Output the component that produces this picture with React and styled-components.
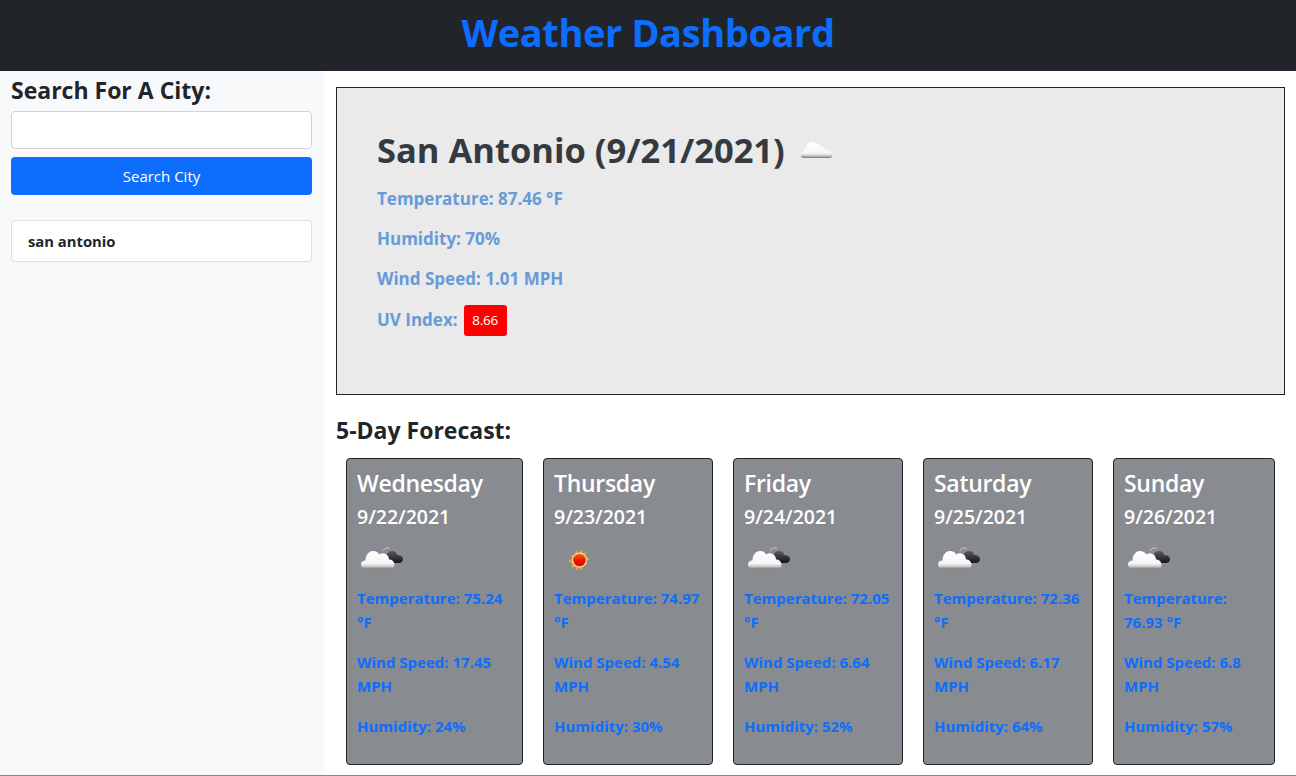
import React from 'react';
import styled, { createGlobalStyle } from 'styled-components';

const Global = createGlobalStyle`
  * { box-sizing: border-box; }
  html, body { margin: 0; padding: 0; background: #fff; }
  body { font-family: "Open Sans", "Noto Sans", "Liberation Sans", sans-serif; color: #212529; height: 776px; overflow: hidden; }
`;

const Page = styled.div`
  height: 776px;
  display: flex;
  flex-direction: column;
  border-bottom: 1px solid #8a8a8a;
`;

const Header = styled.header`
  height: 71px;
  flex: none;
  background: #212529;
  color: #0d6efd;
  display: flex;
  align-items: center;
  justify-content: center;
`;

const Title = styled.h1`
  margin: 0 0 8px;
  font-size: 38px;
  font-weight: 700;
  letter-spacing: -0.4px;
`;

const Body = styled.div`
  flex: 1;
  display: flex;
  min-height: 0;
`;

const Sidebar = styled.aside`
  width: 324px;
  flex: none;
  background: #f8f9fa;
  padding: 4px 12px 0 11px;
`;

const SearchTitle = styled.h4`
  margin: 0 0 6px;
  font-size: 23px;
  line-height: 30px;
  font-weight: 700;
`;

const SearchInput = styled.input`
  display: block;
  width: 100%;
  height: 38px;
  background: #fff;
  border: 1px solid #ced4da;
  border-radius: 4px;
`;

const SearchButton = styled.button`
  display: block;
  width: 100%;
  height: 38px;
  margin-top: 8px;
  background: #0d6efd;
  color: #fff;
  border: 0;
  border-radius: 4px;
  font-family: inherit;
  font-size: 15px;
`;

const HistoryItem = styled.div`
  height: 42px;
  margin-top: 25px;
  padding: 0 16px;
  display: flex;
  align-items: center;
  background: #fff;
  border: 1px solid #dfdfdf;
  border-radius: 4px;
  font-size: 14.8px;
  font-weight: 700;
`;

const Main = styled.main`
  flex: 1;
  padding: 16px 11px 0 12px;
  min-width: 0;
`;

const Current = styled.section`
  height: 308px;
  padding: 39px 40px;
  background: #eaeaea;
  border: 1px solid #212529;
`;

const CityRow = styled.div`
  display: flex;
  align-items: center;
  gap: 15px;
  height: 44px;
  margin-bottom: 16px;
`;

const City = styled.h2`
  margin: 0;
  font-size: 34.5px;
  font-weight: 700;
  color: #343a40;
`;

const Stat = styled.p`
  margin: 0 0 16px;
  font-size: 17px;
  line-height: 24px;
  font-weight: 700;
  color: #679ad8;
`;

const UvRow = styled(Stat)`
  margin-top: -2px;
`;

const UvBadge = styled.span`
  display: inline-block;
  width: 43px;
  height: 31px;
  margin-left: 6px;
  background: #f00;
  color: #fff;
  border-radius: 3px;
  font-size: 13.5px;
  font-weight: 400;
  line-height: 31px;
  text-align: center;
  letter-spacing: -0.2px;
  vertical-align: 1px;
`;

const ForecastTitle = styled.h4`
  margin: 20px 0 13px;
  font-size: 23px;
  line-height: 30px;
  font-weight: 700;
`;

const Cards = styled.div`
  display: grid;
  grid-template-columns: 177px 170px 170px 170px 162px;
  gap: 20px;
  margin-left: 10px;
`;

const Card = styled.article`
  height: 307px;
  padding: 6px 10px;
  background: #888b90;
  border: 1px solid #212529;
  border-radius: 4px;
  color: #fff;
`;

const Day = styled.h4`
  margin: 0 0 4px;
  font-size: 23px;
  line-height: 36px;
  font-weight: 600;
  letter-spacing: -0.3px;
`;

const DateText = styled.h5`
  margin: 0;
  font-size: 19.5px;
  line-height: 24px;
  font-weight: 600;
`;

const IconSlot = styled.div`
  height: 50px;
  margin: 6px 0 1px;
  padding-left: 4px;
  display: flex;
  align-items: center;
`;

const CardStat = styled.p`
  margin: 0 0 16px;
  font-size: 15px;
  line-height: 24px;
  font-weight: 700;
  color: #0d6efd;
`;

const CloudDefs = ({ id }) => (
  <linearGradient id={id} x1="0" y1="0" x2="0" y2="1">
    <stop offset="0" stopColor="#ffffff" />
    <stop offset="0.7" stopColor="#f6f6f6" />
    <stop offset="0.86" stopColor="#c9c9c9" />
    <stop offset="1" stopColor="#777" />
  </linearGradient>
);

const FlatCloud = () => (
  <svg width="34" height="22" viewBox="0 0 34 22">
    <defs><CloudDefs id="flat" /></defs>
    <path d="M3 20c-2 0-3-3-1.500-5 1.500-1.500 3-2.500 4-5 1-3 3-6 6-6 5 0 10 4 14 7 2 1.500 6 2.500 7 4.500.5 2.500-.5 4.500-3 4.500z" fill="url(#flat)" />
  </svg>
);

const BrokenClouds = ({ id }) => (
  <svg width="44" height="30" viewBox="0 0 44 30">
    <defs>
      <CloudDefs id={id} />
      <linearGradient id={id + 'd'} x1="0" y1="0" x2="0" y2="1">
        <stop offset="0" stopColor="#5a5a5a" />
        <stop offset="1" stopColor="#161616" />
      </linearGradient>
    </defs>
    <path d="M22 6c1-3 5-4 7-2" fill="none" stroke="#ddd" strokeWidth="0.8" />
    <path d="M24 18c-2 0-3-2-2-4 .5-2 2-3 3-3 .5-3 3-5 6-5 3 0 5 2 5 4 3 0 6 1.500 6 4 0 2.500-2 4-4 4z" fill={`url(#${id}d)`} />
    <path d="M4 24c-2.500 0-4-2-4-4.500 0-2.500 2-4 4.500-4 0-5 3-9.500 7.500-9.500 3 0 5 1.500 6.500 3.500 1.500-1 3-1.500 4.500-1 3 .5 5 3 5 6 3 0 5.500 2 5.500 5.500 0 2.500-1.500 4-4 4z" fill={`url(#${id})`} />
  </svg>
);

const Sun = () => (
  <svg width="44" height="30" viewBox="0 0 44 30">
    <defs>
      <linearGradient id="sunFill" x1="0" y1="0" x2="0" y2="1">
        <stop offset="0" stopColor="#f26a00" />
        <stop offset="0.55" stopColor="#ee1000" />
        <stop offset="1" stopColor="#e80000" />
      </linearGradient>
    </defs>
    <path d="M18 4l2 4 2-.2 1.500-4 1.500 4.500 4-1-1.500 4 4.500 2.700-4.500 2 1.500 4.500-4-1.500L23.500 26l-2-4-3 4-1-4.500-4.500 1.500 1.500-4.500-4.500-2 4.500-2.700-1.500-4 4 1z" fill="#d8a84a" />
    <circle cx="21.500" cy="15" r="7.500" fill="#f6dfa4" />
    <circle cx="21.500" cy="15" r="6.300" fill="url(#sunFill)" />
  </svg>
);

const forecast = [
  { day: 'Wednesday', date: '9/22/2021', icon: 'cloud', temp: '75.24', wind: '17.45', hum: '24' },
  { day: 'Thursday', date: '9/23/2021', icon: 'sun', temp: '74.97', wind: '4.54', hum: '30' },
  { day: 'Friday', date: '9/24/2021', icon: 'cloud', temp: '72.05', wind: '6.64', hum: '52' },
  { day: 'Saturday', date: '9/25/2021', icon: 'cloud', temp: '72.36', wind: '6.17', hum: '64' },
  { day: 'Sunday', date: '9/26/2021', icon: 'cloud', temp: '76.93', wind: '6.8', hum: '57' },
];

export default function App() {
  return (
    <Page>
      <Global />
      <Header><Title>Weather Dashboard</Title></Header>
      <Body>
        <Sidebar>
          <SearchTitle>Search For A City:</SearchTitle>
          <SearchInput />
          <SearchButton>Search City</SearchButton>
          <HistoryItem>san antonio</HistoryItem>
        </Sidebar>
        <Main>
          <Current>
            <CityRow>
              <City>San Antonio (9/21/2021)</City>
              <FlatCloud />
            </CityRow>
            <Stat>Temperature: 87.46 °F</Stat>
            <Stat>Humidity: 70%</Stat>
            <Stat>Wind Speed: 1.01 MPH</Stat>
            <UvRow>UV Index:<UvBadge>8.66</UvBadge></UvRow>
          </Current>
          <ForecastTitle>5-Day Forecast:</ForecastTitle>
          <Cards>
            {forecast.map((f) => (
              <Card key={f.day}>
                <Day>{f.day}</Day>
                <DateText>{f.date}</DateText>
                <IconSlot>{f.icon === 'sun' ? <Sun /> : <BrokenClouds id={'c' + f.day} />}</IconSlot>
                <CardStat>Temperature: {f.temp} °F</CardStat>
                <CardStat>Wind Speed: {f.wind} MPH</CardStat>
                <CardStat>Humidity: {f.hum}%</CardStat>
              </Card>
            ))}
          </Cards>
        </Main>
      </Body>
    </Page>
  );
}
